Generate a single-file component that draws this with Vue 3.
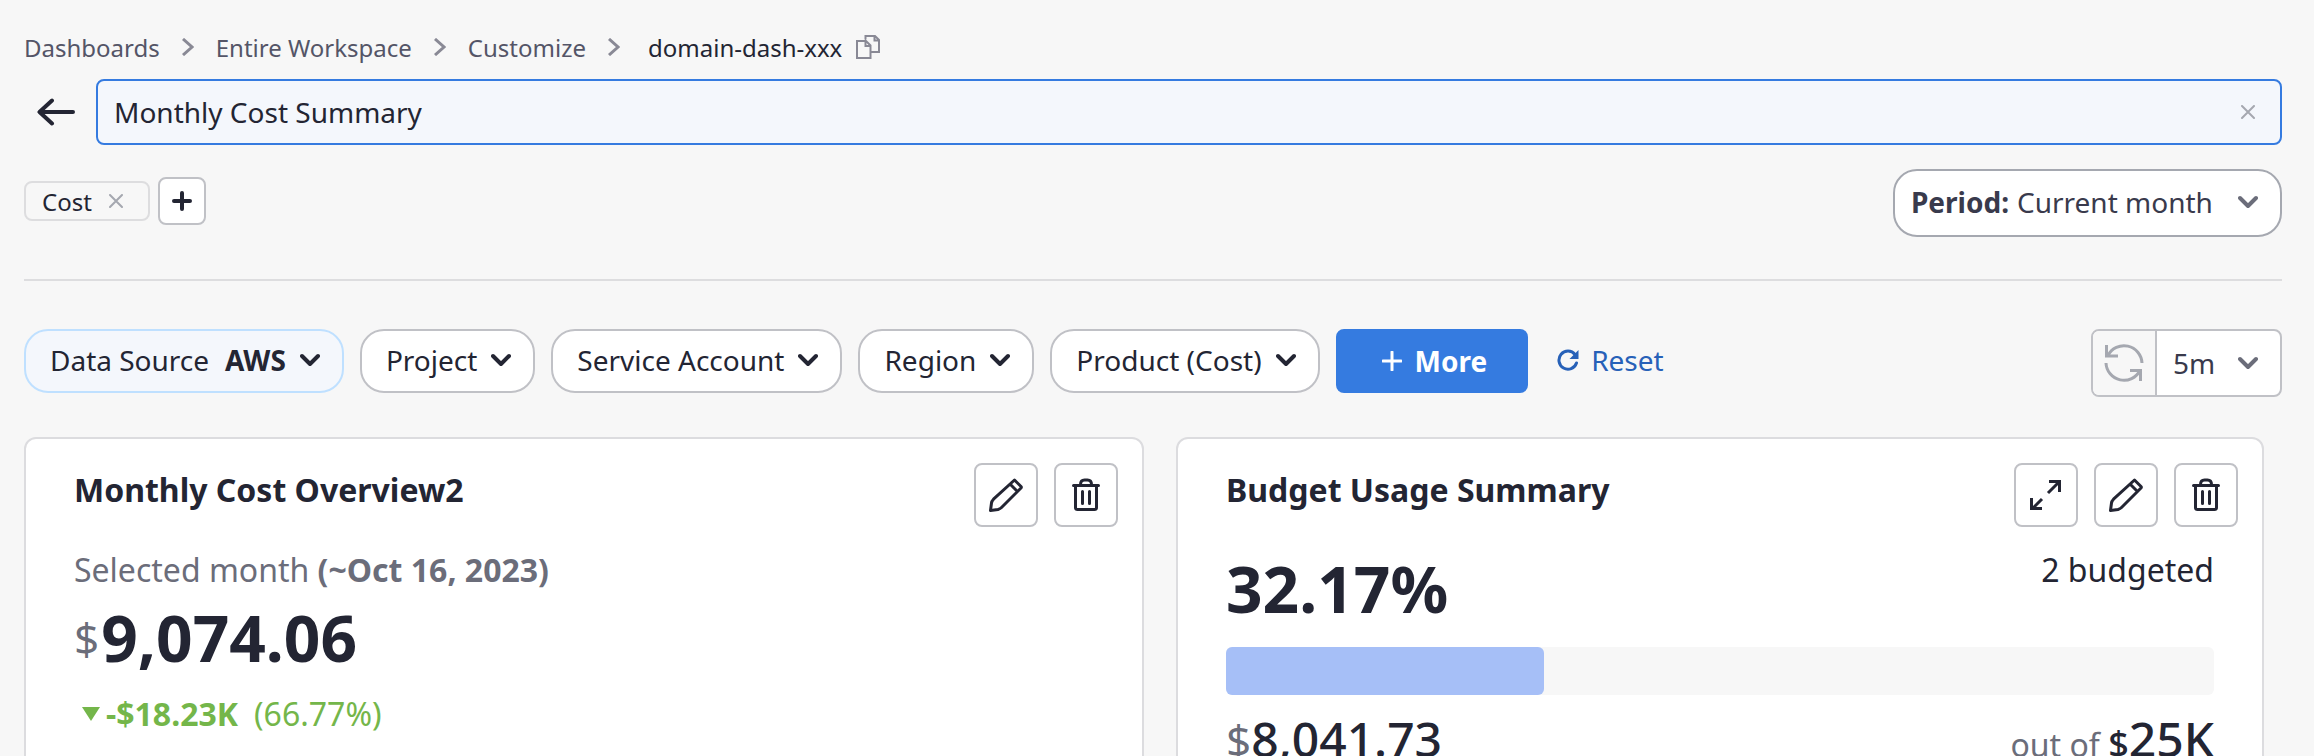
<script setup>
import { ref } from 'vue'

const name = ref('Monthly Cost Summary')
const crumbs = ['Dashboards', 'Entire Workspace', 'Customize']
const filters = [
  { label: 'Data Source', value: 'AWS' },
  { label: 'Project' },
  { label: 'Service Account' },
  { label: 'Region' },
  { label: 'Product (Cost)' },
]
const usage = 32.17
</script>

<template>
  <main class="page">
    <nav class="crumbs" aria-label="Breadcrumb">
      <template v-for="c in crumbs" :key="c">
        <a href="#">{{ c }}</a>
        <svg class="sep" width="12" height="18" viewBox="0 0 12 18"><path d="M1 1l9 8-9 8" /></svg>
      </template>
      <span class="current">domain-dash-xxx</span>
      <button class="plain copy" aria-label="Copy id">
        <svg width="24" height="24" viewBox="0 0 24 24">
          <path d="M1 6h9l4.500 4.500V23H1zM9.500 6v5h5M9.500 4V1H19l4 4v12h-7M18.500 1v4.500H23" />
        </svg>
      </button>
    </nav>

    <div class="name-row">
      <button class="plain back" aria-label="Go back">
        <svg width="40" height="28" viewBox="0 0 40 28"><path d="M37 14H4M16 2.500L3.500 14 16 25.500" /></svg>
      </button>
      <div class="name-box">
        <input v-model="name" type="text" aria-label="Dashboard name" />
        <button class="plain clear" aria-label="Clear name" @click="name = ''">
          <svg width="14" height="14" viewBox="0 0 14 14"><path d="M1 1l12 12M13 1L1 13" /></svg>
        </button>
      </div>
    </div>

    <div class="label-row">
      <div class="tags">
        <span class="tag">Cost
          <button class="plain clear" aria-label="Remove Cost">
            <svg width="14" height="14" viewBox="0 0 14 14"><path d="M1 1l12 12M13 1L1 13" /></svg>
          </button>
        </span>
        <button class="add" aria-label="Add label">
          <svg width="20" height="20" viewBox="0 0 20 20"><path d="M10 2v16M2 10h16" /></svg>
        </button>
      </div>
      <div class="period">
        <label for="period">Period:</label>
        <div class="pick">
          <select id="period"><option>Current month</option></select>
          <svg class="down" width="20" height="14" viewBox="0 0 20 14"><path d="M2 3l8 8 8-8" /></svg>
        </div>
      </div>
    </div>

    <hr />

    <div class="toolbar">
      <button v-for="f in filters" :key="f.label" class="filter" :class="{ active: f.value }" aria-haspopup="listbox">
        <span>{{ f.label }}</span>
        <b v-if="f.value">{{ f.value }}</b>
        <svg class="down" width="20" height="14" viewBox="0 0 20 14"><path d="M2 3l8 8 8-8" /></svg>
      </button>
      <button class="more">
        <svg width="20" height="20" viewBox="0 0 20 20"><path d="M10 1v18M1 10h18" /></svg>
        More
      </button>
      <button class="plain reset">
        <svg width="22" height="22" viewBox="0 0 22 22">
          <path d="M18 5.500A9 9 0 1 0 19.500 14" />
          <path class="tip" d="M21.500 1v9h-9z" />
        </svg>
        Reset
      </button>
      <div class="refresh">
        <button class="plain reload" aria-label="Refresh">
          <svg width="40" height="40" viewBox="0 0 40 40">
            <path d="M38 20A18 18 0 0 0 4 12.500M2 20a18 18 0 0 0 34 7.500M2.500 2v11H14M26 27.500h10.500V38" />
          </svg>
        </button>
        <div class="pick">
          <select aria-label="Refresh interval"><option>5m</option></select>
          <svg class="down" width="20" height="14" viewBox="0 0 20 14"><path d="M2 3l8 8 8-8" /></svg>
        </div>
      </div>
    </div>

    <div class="cards">
      <section v-for="(title, i) in ['Monthly Cost Overview2', 'Budget Usage Summary']" :key="title" class="card">
        <header>
          <h2>{{ title }}</h2>
          <button v-if="i === 1" class="tool" aria-label="Expand">
            <svg width="40" height="40" viewBox="0 0 40 40">
              <path class="square" d="M22 18L33 7M23 6.500h10.500V17M16 24L6 34M5.500 23v10.500H16" />
            </svg>
          </button>
          <button class="tool" aria-label="Edit">
            <svg width="40" height="40" viewBox="0 0 40 40">
              <path d="M28.500 5l6.500 6.500c.5.500.5 1 0 1.500L15.500 32.500c-1 1-2 1.500-3.500 2l-7.500 1 1-7.500c.2-1.500.8-2.500 2-3.800zM24.500 9.500l6.500 6.500" />
            </svg>
          </button>
          <button class="tool" aria-label="Delete">
            <svg width="40" height="40" viewBox="0 0 40 40">
              <path d="M7.500 10.500h25M9.500 10.500v22q0 2 2 2h17q2 0 2-2v-22M14.500 9.500q0-4.500 4-4.500h3q4 0 4 4.500M16.500 16.500v12M23.500 16.500v12" />
            </svg>
          </button>
        </header>

        <div v-if="i === 0" class="content">
          <p class="month">Selected month <b>(~Oct 16, 2023)</b></p>
          <p class="total"><span class="unit">$</span><strong>9,074.06</strong></p>
          <p class="delta">
            <svg width="18" height="14" viewBox="0 0 18 14"><path d="M0 0h18L9 14z" /></svg>
            <b>-$18.23K</b><span>(66.77%)</span>
          </p>
        </div>

        <div v-else class="content">
          <div class="rate">
            <strong>{{ usage }}%</strong>
            <span>2 budgeted</span>
          </div>
          <div class="bar" role="progressbar" aria-label="Budget usage" :aria-valuenow="usage">
            <div class="fill" :style="{ width: usage + '%' }"></div>
          </div>
          <div class="sums">
            <p><span class="unit">$</span><span class="sum">8,041.73</span></p>
            <p><span class="of">out of </span><span class="mark">$</span><span class="sum">25K</span></p>
          </div>
        </div>
      </section>
    </div>
  </main>
</template>

<style>
body {
  margin: 0;
  background: #f7f7f7;
}
</style>

<style scoped>
* {
  box-sizing: border-box;
}
.page {
  height: 100vh;
  overflow-y: auto;
  scrollbar-width: none;
  padding: 31px 32px 0 24px;
  background: #f7f7f7;
  color: #232533;
  font-family: "Noto Sans", "Open Sans", sans-serif;
  font-size: 28px;
}
button,
input,
select {
  font: inherit;
  color: inherit;
  cursor: pointer;
}
svg {
  display: block;
  flex: none;
  fill: none;
  stroke: currentColor;
  stroke-width: 3;
  stroke-linecap: round;
  stroke-linejoin: round;
}
p,
h2 {
  margin: 0;
}
.plain {
  display: flex;
  align-items: center;
  padding: 0;
  border: 0;
  background: none;
}

.crumbs {
  display: flex;
  align-items: center;
  height: 32px;
  margin-bottom: 16px;
  font-size: 24px;
}
.crumbs a {
  color: #545567;
  text-decoration: none;
}
.sep {
  margin: 0 22px;
  color: #898995;
  stroke-width: 3;
  stroke-linecap: butt;
  stroke-linejoin: miter;
}
.current {
  margin-left: 6px;
}
.copy {
  margin-left: 14px;
  color: #898995;
}
.copy svg {
  stroke-width: 2;
  stroke-linejoin: miter;
}

.name-row {
  display: flex;
  align-items: center;
}
.back {
  justify-content: center;
  flex: none;
  width: 64px;
  margin-right: 8px;
}
.back svg {
  stroke-width: 4;
}
.name-box {
  display: flex;
  flex: 1;
  align-items: center;
  height: 66px;
  padding: 0 25px 0 16px;
  border: 2px solid #357be0;
  border-radius: 8px;
  background: #f4f7fc;
}
.name-box input {
  flex: 1;
  min-width: 0;
  padding: 0;
  border: 0;
  outline: 0;
  background: none;
}
.clear {
  color: #a5a8b0;
}
.clear svg {
  stroke-width: 2;
}

.label-row {
  display: flex;
  align-items: flex-start;
  justify-content: space-between;
  margin-top: 24px;
}
.tags {
  display: flex;
  align-items: center;
  gap: 8px;
  height: 64px;
}
.tag {
  display: flex;
  align-items: center;
  gap: 17px;
  height: 40px;
  padding: 0 25px 0 16px;
  border: 2px solid #dddddf;
  border-radius: 8px;
  font-size: 24px;
}
.add {
  display: grid;
  place-items: center;
  width: 48px;
  height: 48px;
  padding: 0;
  border: 2px solid #c0c1c6;
  border-radius: 8px;
  background: #fff;
}
.add svg {
  stroke-width: 4;
}
.period {
  display: flex;
  align-items: center;
  height: 68px;
  padding: 0 22px 2px 16px;
  border: 2px solid #a5a8b0;
  border-radius: 24px;
  background: #fff;
  color: #393a4c;
}
.period label {
  margin-right: 8px;
  font-weight: 700;
}
.period select {
  padding-right: 44px;
}
.pick {
  display: grid;
  align-items: center;
}
.pick select {
  grid-area: 1 / 1;
  appearance: none;
  padding: 0 42px 0 0;
  border: 0;
  outline: 0;
  background: none;
}
.period .pick select {
  padding-right: 45px;
}
.pick .down {
  grid-area: 1 / 1;
  justify-self: end;
  pointer-events: none;
  color: #6b6d7a;
}
.down {
  stroke-width: 4;
}
hr {
  margin: 42px 0 48px;
  border: 0;
  border-top: 2px solid #dddddf;
}

.toolbar {
  display: flex;
  align-items: flex-start;
  gap: 16px;
}
.filter {
  display: flex;
  align-items: center;
  height: 64px;
  padding: 0 22px 2px 24px;
  border: 2px solid #c0c1c6;
  border-radius: 24px;
  background: #fff;
  white-space: nowrap;
}
.filter.active {
  border-color: #bfe0ff;
  background: #f4f7fc;
}
.filter b {
  margin-left: 16px;
}
.filter .down {
  margin-left: 14px;
}
.more {
  display: flex;
  align-items: center;
  gap: 13px;
  height: 64px;
  padding: 0 41px 0 46px;
  border: 0;
  border-radius: 8px;
  background: #357be0;
  color: #fff;
  font-weight: 700;
}
.reset {
  gap: 12px;
  height: 64px;
  margin-left: 13px;
  padding-bottom: 2px;
  color: #2761b8;
}
.reset .tip {
  fill: currentColor;
  stroke: none;
}
.refresh {
  display: flex;
  height: 68px;
  margin-left: auto;
  border: 2px solid #c0c1c6;
  border-radius: 8px;
  background: #fff;
  color: #393a4c;
  overflow: hidden;
}
.reload {
  justify-content: center;
  width: 64px;
  border-right: 2px solid #c0c1c6;
  background: #f7f7f7;
  color: #a5a8b0;
}
.reload svg {
  stroke-linecap: butt;
  stroke-linejoin: miter;
}
.refresh .pick {
  padding: 0 22px 0 16px;
}

.cards {
  display: grid;
  grid-template-columns: 35fr 34fr;
  gap: 32px;
  margin: 40px 18px 0 0;
}
.card {
  min-height: 480px;
  padding: 24px;
  border: 2px solid #dcdcdf;
  border-radius: 12px;
  background: #fff;
}
.card header {
  display: flex;
  gap: 16px;
  padding-left: 24px;
}
h2 {
  flex: 1;
  font-size: 32px;
  font-weight: 700;
  line-height: 54px;
}
.tool {
  display: grid;
  place-items: center;
  width: 64px;
  height: 64px;
  padding: 0;
  border: 2px solid #c0c1c6;
  border-radius: 8px;
  background: #fff;
}
.square {
  stroke-linecap: butt;
  stroke-linejoin: miter;
}
.content {
  padding: 21px 24px 0;
  font-size: 32px;
  line-height: 44px;
}
.month,
.of {
  color: #6b6d7a;
}
.unit {
  color: #6b6d7a;
  font-size: 44px;
}
.total {
  display: flex;
  align-items: center;
  gap: 2px;
  height: 92px;
}
.total strong,
.rate strong {
  font-size: 64px;
  line-height: 82px;
}
.delta {
  display: flex;
  align-items: center;
  margin-top: 8px;
  padding-left: 8px;
  color: #74b64a;
}
.delta svg {
  margin-right: 6px;
  fill: currentColor;
  stroke: none;
}
.delta span {
  margin-left: 16px;
}
.rate,
.sums {
  display: flex;
  justify-content: space-between;
}
.bar {
  height: 48px;
  margin: 17px 0 12px;
  border-radius: 6px;
  background: #f7f7f7;
}
.fill {
  height: 100%;
  border-radius: 6px;
  background: #a6bff7;
}
.sums {
  line-height: 64px;
}
.sum {
  font-size: 48px;
  font-weight: 500;
}
.mark {
  font-size: 36px;
  font-weight: 500;
}
</style>
